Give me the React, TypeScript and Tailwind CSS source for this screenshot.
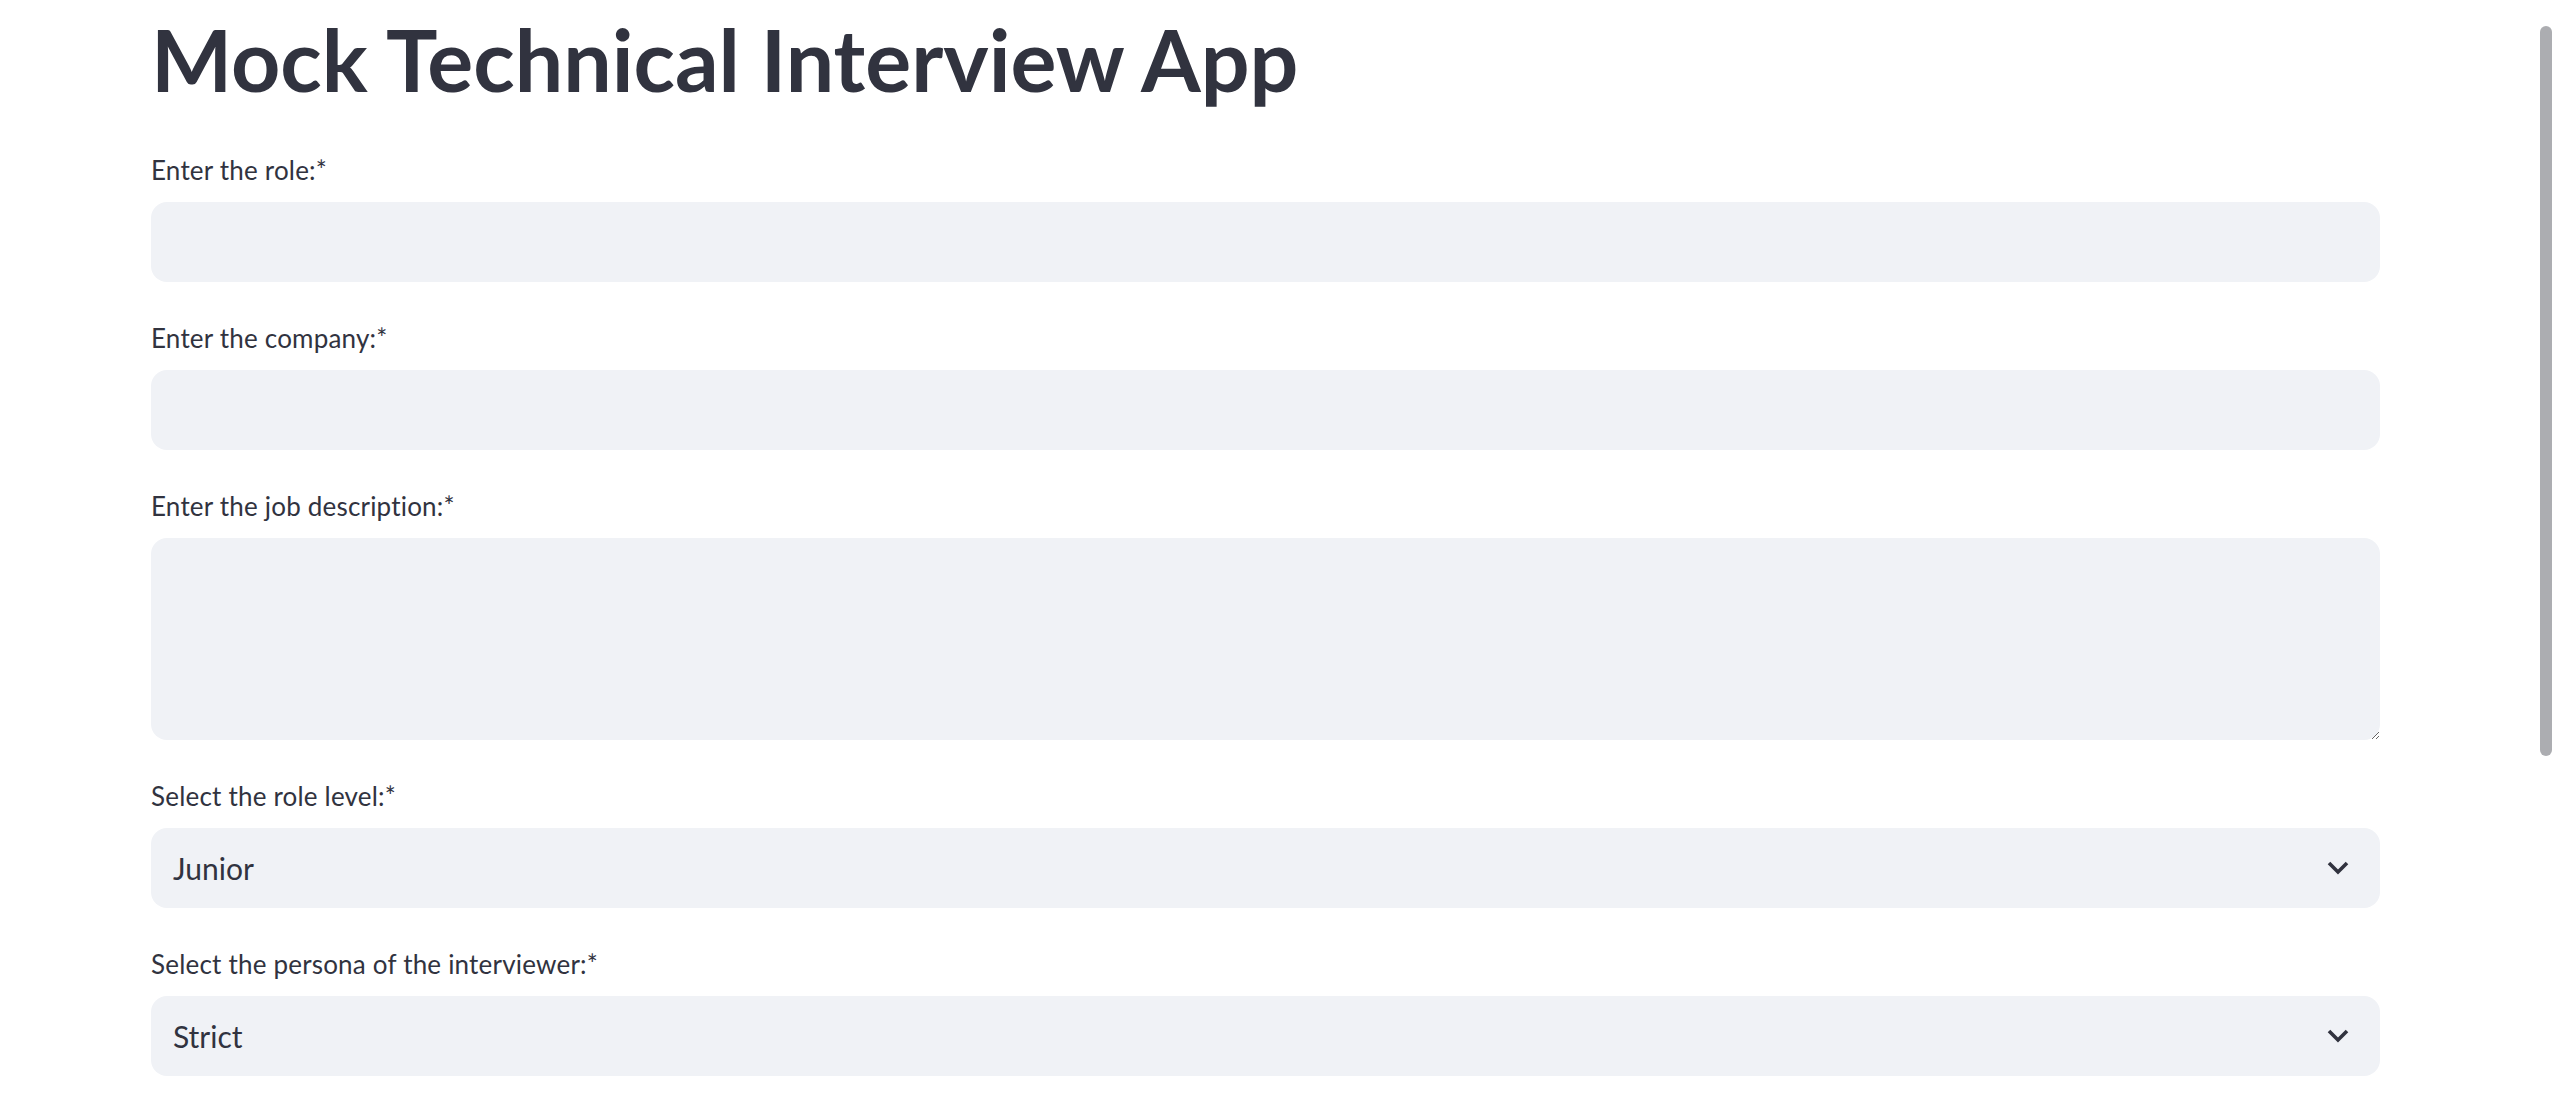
import React from 'react';

const font = { fontFamily: 'Lato, "Liberation Sans", sans-serif' };

const Label: React.FC<{ text: string }> = ({ text }) => (
  <label className="block h-[44px] mb-[10px] text-[26px] leading-[44px] text-[#31333f] tracking-[0.2px]">
    {text}
  </label>
);

const Chevron = () => (
  <svg width="22" height="14" viewBox="0 0 22 14" fill="none" className="shrink-0">
    <polyline points="2,2 11,11 20,2" stroke="#31333f" strokeWidth="3.6" strokeLinejoin="miter" />
  </svg>
);

const SelectBox: React.FC<{ value: string }> = ({ value }) => (
  <div className="h-[80px] rounded-[16px] bg-[#f0f2f6] flex items-center justify-between pl-[22px] pr-[31px]">
    <span className="text-[30px] leading-[1.2] text-[#31333f]">{value}</span>
    <Chevron />
  </div>
);

export default function App() {
  return (
    <div className="h-screen overflow-hidden bg-white relative" style={font}>
      <div className="pl-[151px] pr-[172px] pt-[7px]">
        <h1 className="text-[86px] font-bold leading-[1.2] text-[#31333f] mb-[38px]">
          Mock Technical Interview App
        </h1>

        <div className="flex flex-col gap-[34px]">
          <div>
            <Label text="Enter the role:*" />
            <input className="w-full h-[80px] rounded-[16px] bg-[#f0f2f6] px-[22px] text-[30px] outline-none" />
          </div>
          <div>
            <Label text="Enter the company:*" />
            <input className="w-full h-[80px] rounded-[16px] bg-[#f0f2f6] px-[22px] text-[30px] outline-none" />
          </div>
          <div>
            <Label text="Enter the job description:*" />
            <textarea className="block w-full h-[202px] rounded-[16px] bg-[#f0f2f6] px-[22px] py-[16px] text-[30px] outline-none resize-y" />
          </div>
          <div>
            <Label text="Select the role level:*" />
            <SelectBox value="Junior" />
          </div>
          <div>
            <Label text="Select the persona of the interviewer:*" />
            <SelectBox value="Strict" />
          </div>
        </div>
      </div>

      {/* scrollbar thumb */}
      <div className="absolute right-0 top-[26px] w-[12px] h-[730px] rounded-[6px] bg-[#acadb1]" />
    </div>
  );
}
